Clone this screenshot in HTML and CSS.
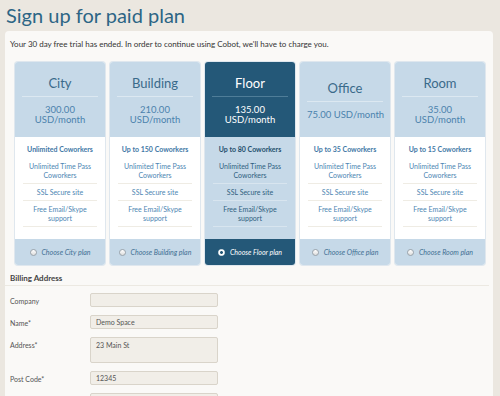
FILE: index.html
```html
<!DOCTYPE html>
<html lang="en">
<head>
  <meta charset="UTF-8">
  <title>Sign up for paid plan</title>
  <link rel="stylesheet" href="styles.css">
</head>
<body>
  <h1 class="page-title">Sign up for paid plan</h1>
  <div class="card">
    <p class="intro">Your 30 day free trial has ended. In order to continue using Cobot, we'll have to charge you.</p>

    <div class="plans">
      <div class="plan">
        <div class="plan-head">
          <div class="plan-name">City</div>
          <div class="plan-price">300.00<br>USD/month</div>
        </div>
        <div class="plan-body">
          <div class="plan-seats">Unlimited Coworkers</div>
          <ul class="plan-features">
            <li>Unlimited Time Pass Coworkers</li>
            <li>SSL Secure site</li>
            <li>Free Email/Skype support</li>
          </ul>
        </div>
        <label class="plan-foot"><span class="radio"></span>Choose City plan</label>
      </div>

      <div class="plan">
        <div class="plan-head">
          <div class="plan-name">Building</div>
          <div class="plan-price">210.00<br>USD/month</div>
        </div>
        <div class="plan-body">
          <div class="plan-seats">Up to 150 Coworkers</div>
          <ul class="plan-features">
            <li>Unlimited Time Pass Coworkers</li>
            <li>SSL Secure site</li>
            <li>Free Email/Skype support</li>
          </ul>
        </div>
        <label class="plan-foot"><span class="radio"></span>Choose Building plan</label>
      </div>

      <div class="plan selected">
        <div class="plan-head">
          <div class="plan-name">Floor</div>
          <div class="plan-price">135.00<br>USD/month</div>
        </div>
        <div class="plan-body">
          <div class="plan-seats">Up to 80 Coworkers</div>
          <ul class="plan-features">
            <li>Unlimited Time Pass Coworkers</li>
            <li>SSL Secure site</li>
            <li>Free Email/Skype support</li>
          </ul>
        </div>
        <label class="plan-foot"><span class="radio checked"></span>Choose Floor plan</label>
      </div>

      <div class="plan">
        <div class="plan-head">
          <div class="plan-name">Office</div>
          <div class="plan-price">75.00 USD/month</div>
        </div>
        <div class="plan-body">
          <div class="plan-seats">Up to 35 Coworkers</div>
          <ul class="plan-features">
            <li>Unlimited Time Pass Coworkers</li>
            <li>SSL Secure site</li>
            <li>Free Email/Skype support</li>
          </ul>
        </div>
        <label class="plan-foot"><span class="radio"></span>Choose Office plan</label>
      </div>

      <div class="plan">
        <div class="plan-head">
          <div class="plan-name">Room</div>
          <div class="plan-price">35.00<br>USD/month</div>
        </div>
        <div class="plan-body">
          <div class="plan-seats">Up to 15 Coworkers</div>
          <ul class="plan-features">
            <li>Unlimited Time Pass Coworkers</li>
            <li>SSL Secure site</li>
            <li>Free Email/Skype support</li>
          </ul>
        </div>
        <label class="plan-foot"><span class="radio"></span>Choose Room plan</label>
      </div>
    </div>

    <h2 class="section-title">Billing Address</h2>
    <div class="form">
      <label class="form-label">Company</label>
      <div class="field"></div>

      <label class="form-label">Name*</label>
      <div class="field">Demo Space</div>

      <label class="form-label">Address*</label>
      <div class="field field-area">23 Main St</div>

      <label class="form-label">Post Code*</label>
      <div class="field">12345</div>

      <label class="form-label"></label>
      <div class="field"></div>
    </div>
  </div>
</body>
</html>
```

FILE: styles.css
```css
* {
  box-sizing: border-box;
}
body {
  margin: 0;
  background: #ebe7e0;
  font-family: Lato, 'Open Sans', sans-serif;
  color: #3a3a3a;
  height: 396px;
  overflow: hidden;
}
.page-title {
  margin: 0;
  padding: 3px 6px 0;
  height: 31px;
  font-size: 20px;
  font-weight: normal;
  color: #2d6585;
}
.card {
  margin: 0 7px 0 5px;
  padding: 8px 4px 0 0;
  background: #faf9f7;
  border-radius: 4px 4px 0 0;
  height: 400px;
}
.intro {
  margin: 0 0 13px 5px;
  font-size: 8px;
  line-height: 10px;
  color: #333;
}
.plans {
  display: flex;
  gap: 5px;
  padding-left: 10px;
}
.plan {
  width: 90px;
  display: flex;
  flex-direction: column;
  background: #fff;
  border-radius: 3px;
  overflow: hidden;
  box-shadow: 0 0 0 1px #dfe7ee;
}
.plan-head {
  height: 75px;
  background: #c6d9e8;
  display: flex;
  flex-direction: column;
  justify-content: center;
  padding: 0 7px;
  text-align: center;
  color: #3a6a8a;
}
.plan-name {
  font-size: 13px;
  padding-bottom: 5px;
  border-bottom: 1px solid #dce8f1;
}
.plan-price {
  margin-top: 8px;
  font-size: 9.5px;
  line-height: 10px;
  white-space: nowrap;
  color: #4b82ad;
}
.plan-body {
  height: 102px;
  padding: 8px 8px 0;
  text-align: center;
  font-size: 7px;
  line-height: 9px;
  color: #4d86b3;
}
.plan-seats {
  font-weight: bold;
  color: #3f78a6;
  margin-bottom: 4px;
}
.plan-features {
  list-style: none;
  margin: 0;
  padding: 0;
}
.plan-features li {
  padding: 4px 4px 3px;
  border-bottom: 1px solid #efece4;
}
.plan-foot {
  height: 26px;
  background: #c6d9e8;
  display: flex;
  align-items: center;
  justify-content: center;
  gap: 5px;
  font-size: 7px;
  font-style: italic;
  color: #3f6f93;
}
.radio {
  width: 7px;
  height: 7px;
  border-radius: 50%;
  border: 1px solid #9aa3aa;
  background: linear-gradient(#fff, #ddd);
}
.radio.checked {
  border-color: #fff;
  background: radial-gradient(circle, #245878 35%, #fff 45%);
}
.plan.selected .plan-head,
.plan.selected .plan-foot {
  background: #245878;
  color: #fff;
}
.plan.selected .plan-name {
  border-bottom-color: #4f7d98;
}
.plan.selected .plan-price {
  color: #fff;
}
.plan.selected .plan-body {
  background: #c6d9e8;
  color: #2f5f80;
}
.plan.selected .plan-seats {
  color: #244f6d;
}
.plan.selected .plan-features li {
  border-bottom-color: #d8e5ef;
}
.section-title {
  margin: 8px 0 0;
  padding: 0 0 2px 5px;
  font-size: 8px;
  line-height: 10px;
  font-weight: bold;
  color: #444;
  border-bottom: 1px solid #ece9e2;
}
.form {
  display: grid;
  grid-template-columns: 80px 128px;
  row-gap: 8px;
  padding: 7px 0 0 5px;
}
.form-label {
  font-size: 7px;
  padding-top: 4px;
  color: #555;
}
.field {
  height: 14px;
  border: 1px solid #d9d4ca;
  border-radius: 2px;
  background: #f1eee8;
  font-size: 7px;
  line-height: 12px;
  padding: 0 5px;
  color: #555;
}
.field-area {
  height: 26px;
  padding-top: 2px;
  line-height: 10px;
}
```
